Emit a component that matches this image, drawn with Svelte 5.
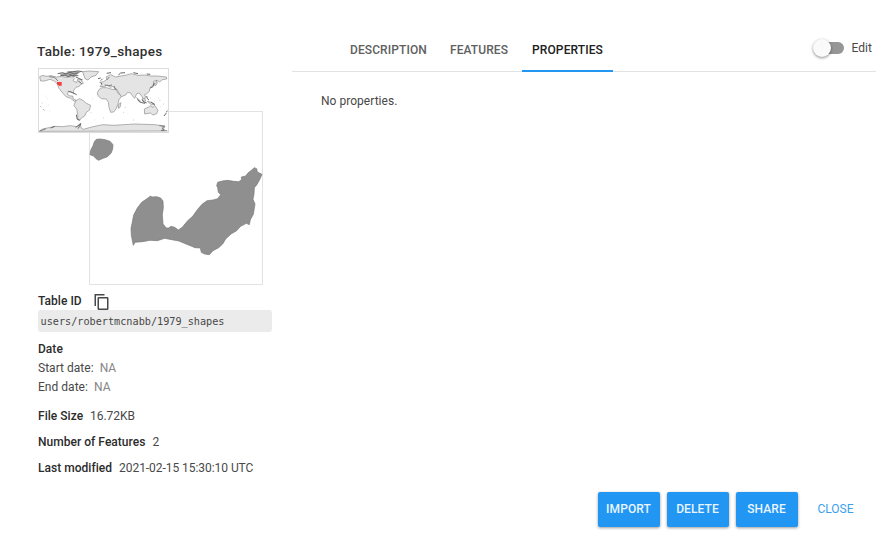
<script>
  const tabs = ['Description', 'Features', 'Properties'];
  let active = $state('Properties');
  let editing = $state(false);
  const facts = [
    { label: 'File Size', value: '16.72KB' },
    { label: 'Number of Features', value: '2' },
    { label: 'Last modified', value: '2021-02-15 15:30:10 UTC' }
  ];
</script>

<div class="dialog">
  <div class="body">
    <aside>
      <h1>Table: 1979_shapes</h1>
      <div class="preview">
        <svg class="shapes" viewBox="27 18 522 522">
          <rect x="28.5" y="19.5" width="519" height="519" fill="#fff" stroke="#e2e2e2" stroke-width="3" />
          <g fill="#8f8f8f" stroke="#777" stroke-width="2" stroke-linejoin="round">
            <path d="M49 103 L62 102 L75 104 L90 109 L99 119 L98 132 L93 145 L81 156 L69 160 L56 166 L48 161 L41 153 L30 149 L32 136 L39 122 L43 110Z" />
            <path d="M207 277 L211 273 L216 276 L230 275 L242 279 L249 288 L250 308 L247 329 L249 357 L259 369 L267 369 L272 364 L284 367 L295 375 L307 367 L323 347 L338 334 L353 313 L366 298 L381 287 L399 285 L413 281 L422 269 L415 262 L413 248 L410 242 L413 232 L427 228 L443 226 L461 229 L476 230 L485 224 L484 216 L497 213 L504 204 L515 195 L523 188 L530 191 L532 201 L546 208 L539 224 L530 240 L523 248 L522 268 L519 283 L525 297 L520 328 L511 344 L508 359 L499 355 L482 364 L470 377 L453 387 L437 402 L428 417 L416 428 L399 437 L388 449 L374 447 L364 442 L361 429 L345 428 L331 422 L318 417 L297 408 L275 404 L254 400 L232 407 L210 406 L187 410 L165 412 L160 421 L157 407 L154 390 L153 370 L157 351 L161 330 L172 309 L185 292Z" />
          </g>
        </svg>
        <svg class="world" viewBox="24 24 393 195">
          <rect x="25.5" y="25.5" width="390" height="192" fill="#fff" stroke="#dcdcdc" stroke-width="3" />
          <g fill="#e4e4e4" stroke="#8c8c8c" stroke-width="2" stroke-linejoin="round">
            <path d="M29 50 L39 46 L48 49 L63 47 L80 51 L94 49 L108 52 L127 50 L133 56 L129 62 L140 68 L143 58 L151 57 L160 70 L151 74 L148 79 L138 82 L131 91 L130 101 L124 95 L115 94 L112 103 L120 108 L128 108 L130 117 L138 121 L133 124 L122 115 L108 110 L98 99 L87 85 L82 72 L73 63 L60 58 L44 63 L32 63Z" />
            <path d="M139 121 L149 116 L160 122 L169 130 L182 136 L178 151 L169 157 L164 168 L154 174 L149 181 L144 180 L143 163 L140 147 L132 137 L135 128Z" />
            <path d="M158 35 L179 33 L206 35 L198 46 L183 51 L174 60 L166 57 L161 45Z" />
            <path d="M207 89 L216 83 L230 83 L246 88 L259 89 L264 100 L275 108 L267 119 L264 132 L259 145 L251 156 L242 157 L237 142 L235 127 L229 117 L214 116 L204 107 L202 98Z" />
            <path d="M210 80 L216 71 L209 67 L221 65 L231 58 L228 51 L242 44 L257 51 L273 48 L286 46 L304 41 L324 46 L344 45 L361 48 L381 48 L409 51 L410 57 L397 59 L389 66 L382 61 L370 64 L374 74 L365 79 L360 84 L358 94 L350 101 L344 104 L347 113 L341 119 L336 110 L328 99 L320 101 L314 115 L307 107 L302 99 L292 97 L287 105 L274 110 L265 96 L261 88 L253 85 L250 79 L240 82 L232 75 L225 79Z" />
            <path d="M343 147 L356 141 L361 137 L369 142 L374 136 L384 151 L380 161 L369 165 L361 159 L344 162Z" />
            <path d="M27 214 L38 207 L57 203 L75 199 L98 200 L120 197 L141 200 L151 190 L153 203 L160 208 L185 201 L218 194 L252 196 L281 194 L315 192 L345 193 L374 194 L405 198 L399 209 L412 213Z" />
            <path d="M266 133 l7 -5 l-3 14 l-5 3Z M320 113 l12 11 l-3 1Z M336 117 l8 -3 l3 10 l-9 -1Z M352 124 l13 3 l10 7 l-11 0Z M372 75 l6 -7 l1 -8 l3 7 l-4 9Z" />
          </g>
          <path d="M89 41 L106 38 L122 36 L139 34 L153 35 L144 41 L138 46 L128 49 L106 49 L94 47Z" fill="#a8a8a8" />
          <g fill="none" stroke="#686868" stroke-width="3">
            <path d="M83 41 l15 -3 l10 4 l12 -5 l13 5 l12 -4 M91 47 l14 -2 l9 5 l11 -4 l9 4 M112 36 l15 -1 l17 -2 l13 2 M118 43 l10 4 l17 0 M137 51 l9 4 l12 5 M145 63 l10 8 M204 56 l8 -2 M213 68 l3 5 M230 40 l13 -2 M265 45 l7 -6 l13 -1 M310 38 l14 3 M350 42 l11 1 M337 119 l4 7 l9 3 M350 108 l2 8 l5 4 M372 68 l-3 12 l-9 4 M322 119 l9 8 l14 3 M363 127 l11 6 M402 168 l7 -9 M409 157 l3 -5 M139 164 l3 14 l7 2 M62 204 l13 -5 M137 202 l16 -11 l-9 15 M393 211 l10 0 M115 94 l13 4 l12 6" />
            <path d="M58 50l16 2l10 11M212 62l6-6M230 60l8-9M224 75l12 2l10-2M252 78l6 12M30 213l18-7M388 197l16 2l-8 6l8 6" stroke="#7c7c7c" />
          </g>
          <path d="M47 108h1m5 7h1m-19 14h2m17 4h1m-13 18h2m15 2h1M187 116h1m-6 42h2m8 22h1m92-38h2m-7 15h2m104-44h1m-15 12h1m17 14h1m-30-25h2M220 174h2M310 180h2M389 121h2m8 11h2M30 138l4 4M39 147l3 4" stroke="#999" stroke-width="2" />
          <path d="M81 66h14v11h-8l-6-5Z" fill="#f43d3d" />
        </svg>
      </div>
      <div class="idrow">
        <b>Table ID</b>
        <svg width="16" height="18" viewBox="0 0 16 18" fill="none" stroke="#484848" stroke-width="1.5">
          <path d="M1.25 13V1.75H10.5" />
          <rect x="4.25" y="4.75" width="9.5" height="11.5" rx=".6" />
        </svg>
      </div>
      <code>users/robertmcnabb/1979_shapes</code>
      <div class="dates">
        <b>Date</b>
        <div>Start date: <span class="na">NA</span></div>
        <div>End date: <span class="na">NA</span></div>
      </div>
      {#each facts as fact}
        <div class="fact"><b>{fact.label}</b><span>{fact.value}</span></div>
      {/each}
    </aside>

    <main>
      <nav>
        {#each tabs as tab}
          <button class="tab" class:active={active === tab} onclick={() => (active = tab)}>{tab}</button>
        {/each}
        <button class="edit" onclick={() => (editing = !editing)}>
          <span class="track" class:on={editing}><i></i></span>Edit
        </button>
      </nav>
      <p>No properties.</p>
    </main>
  </div>

  <footer>
    <button class="action">Import</button>
    <button class="action">Delete</button>
    <button class="action">Share</button>
    <button class="close">Close</button>
  </footer>
</div>

<style>
  :global(body) { background: #fff; }
  .dialog {
    box-sizing: border-box;
    width: 889px;
    height: 533px;
    display: flex;
    flex-direction: column;
    overflow: hidden;
    font: 12px/19px Roboto, sans-serif;
    letter-spacing: .03px;
    color: #484848;
  }
  .body { display: flex; height: 491.5px; }
  aside { width: 292px; box-sizing: border-box; padding: 41px 20px 0 38px; }
  h1 { margin: 0 0 7px -1px; font-size: 13.5px; line-height: 20px; font-weight: 500; color: #303030; letter-spacing: .3px; }
  b { font-weight: 500; color: #2c2c2c; }
  .preview { position: relative; height: 217px; padding-left: 51px; box-sizing: border-box; padding-top: 43px; }
  .shapes { display: block; width: 174px; height: 174px; }
  .world { position: absolute; left: 0; top: 0; width: 131px; height: 65px; }
  .idrow { display: flex; align-items: center; gap: 12px; height: 19px; margin-top: 7px; }
  code {
    display: block;
    height: 22px;
    margin-top: -1px;
    padding-left: 2.5px;
    border-radius: 3px;
    background: #ebebeb;
    font: 10.2px/23px "DejaVu Sans Mono", monospace;
    letter-spacing: 0;
    width: 231.5px;
  }
  .dates { margin: 8px 0 10px; }
  .na { color: #858585; margin-left: 3px; }
  .fact { height: 19px; margin-bottom: 7px; }
  .fact span { margin-left: 7px; letter-spacing: -.05px; }
  main { width: 584px; }
  nav { display: flex; height: 72px; box-sizing: border-box; padding: 28px 4px 0 40px; border-bottom: 1px solid #e2e2e2; }
  button { font: inherit; letter-spacing: inherit; border: 0; background: none; padding: 0; cursor: pointer; }
  .tab {
    height: 44px;
    padding: 2px 10px 0 18px;
    font-weight: 500;
    letter-spacing: .1px;
    text-transform: uppercase;
    color: #606060;
    border-bottom: 2px solid transparent;
  }
  .tab:nth-child(2) { padding: 2px 14px 0 13px; }
  .tab.active { padding: 2px 10px 0; color: #202020; border-color: #2196f3; }
  .edit { margin-left: auto; display: flex; align-items: center; gap: 8px; height: 40px; color: #484848; }
  .track { position: relative; width: 30px; height: 12px; border-radius: 6px; background: #969696; }
  .track i {
    position: absolute;
    left: -1px;
    top: -3px;
    width: 18px;
    height: 18px;
    border-radius: 50%;
    background: #fafafa;
    box-shadow: 0 1px 3px #0007;
  }
  .track.on i { left: 14px; }
  p { margin: 20px 0 0 29px; }
  footer { display: flex; justify-content: flex-end; gap: 7px; padding-right: 18.5px; }
  .action {
    width: 62px;
    height: 35px;
    border-radius: 2px;
    background: #2196f3;
    color: #eaf5ff;
    font-weight: 500;
    letter-spacing: .1px;
    text-transform: uppercase;
    box-shadow: 0 1px 3px #0006;
  }
  .close { width: 66px; padding-right: 4px; color: #3c9fec; text-transform: uppercase; }
</style>
